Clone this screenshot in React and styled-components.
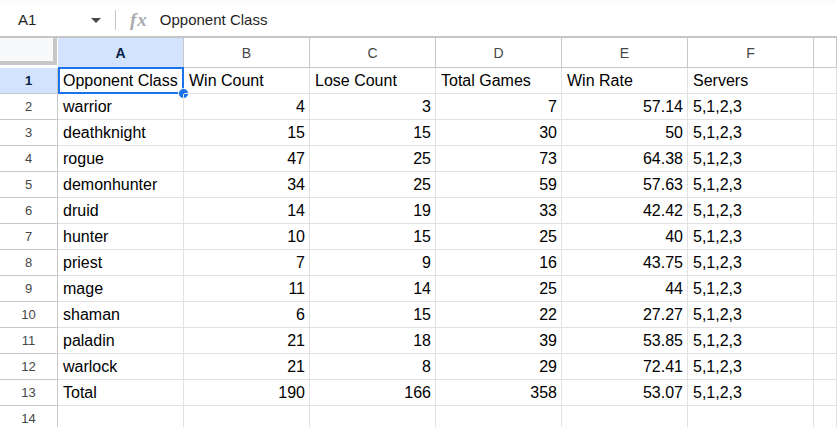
import React from 'react';
import styled, { createGlobalStyle } from 'styled-components';

const GlobalStyle = createGlobalStyle`
  html, body {
    margin: 0;
    padding: 0;
    background: #fff;
    overflow: hidden;
  }
  body {
    font-family: "Liberation Sans", Arial, sans-serif;
  }
`;

const rows = [
  ['Opponent Class', 'Win Count', 'Lose Count', 'Total Games', 'Win Rate', 'Servers'],
  ['warrior', 4, 3, 7, 57.14, '5,1,2,3'],
  ['deathknight', 15, 15, 30, 50, '5,1,2,3'],
  ['rogue', 47, 25, 73, 64.38, '5,1,2,3'],
  ['demonhunter', 34, 25, 59, 57.63, '5,1,2,3'],
  ['druid', 14, 19, 33, 42.42, '5,1,2,3'],
  ['hunter', 10, 15, 25, 40, '5,1,2,3'],
  ['priest', 7, 9, 16, 43.75, '5,1,2,3'],
  ['mage', 11, 14, 25, 44, '5,1,2,3'],
  ['shaman', 6, 15, 22, 27.27, '5,1,2,3'],
  ['paladin', 21, 18, 39, 53.85, '5,1,2,3'],
  ['warlock', 21, 8, 29, 72.41, '5,1,2,3'],
  ['Total', 190, 166, 358, 53.07, '5,1,2,3'],
  ['', '', '', '', '', ''],
];

const columns = ['A', 'B', 'C', 'D', 'E', 'F', ''];

const App = () => {
  return (
    <>
      <GlobalStyle />
      <Page>
        <FormulaBar>
          <NameBox>
            <CellRef>A1</CellRef>
            <Caret />
          </NameBox>
          <Divider />
          <FxIcon>fx</FxIcon>
          <FormulaText>Opponent Class</FormulaText>
        </FormulaBar>
        <Grid>
          <Corner />
          {columns.map((c, i) => (
            <ColHeader key={i} $selected={c === 'A'}>{c}</ColHeader>
          ))}
          {rows.map((r, ri) => (
            <React.Fragment key={ri}>
              <RowHeader $selected={ri === 0}>{ri + 1}</RowHeader>
              {r.map((v, ci) => (
                <Cell key={ci} $numeric={typeof v === 'number'}>
                  {v}
                  {ri === 0 && ci === 0 && (
                    <Selection>
                      <Handle />
                    </Selection>
                  )}
                </Cell>
              ))}
              <Cell />
            </React.Fragment>
          ))}
        </Grid>
      </Page>
    </>
  );
};

const Page = styled.div`
  width: 837px;
  height: 427px;
  overflow: hidden;
`;

const FormulaBar = styled.div`
  height: 38px;
  box-sizing: border-box;
  border-top: 3px solid #f9fbfd;
  border-bottom: 2px solid #c4c7c5;
  display: flex;
  align-items: center;
  background: #fff;
`;

const NameBox = styled.div`
  width: 115px;
  display: flex;
  align-items: center;
  justify-content: space-between;
  padding: 0 14px 0 18px;
  box-sizing: border-box;
`;

const CellRef = styled.span`
  font-size: 15px;
  color: #1f1f1f;
`;

const Caret = styled.span`
  width: 0;
  height: 0;
  border-left: 5px solid transparent;
  border-right: 5px solid transparent;
  border-top: 5px solid #444746;
  margin-top: 1px;
`;

const Divider = styled.div`
  width: 1px;
  height: 20px;
  background: #c4c7c5;
`;

const FxIcon = styled.span`
  margin-left: 14px;
  font-family: "Liberation Serif", "Times New Roman", serif;
  font-style: italic;
  font-weight: 700;
  font-size: 19px;
  color: #a8abaf;
  letter-spacing: 1px;
`;

const FormulaText = styled.span`
  margin-left: 12px;
  font-size: 15px;
  color: #1f1f1f;
`;

const Grid = styled.div`
  display: grid;
  grid-template-columns: 58px repeat(6, 126px) 1fr;
  grid-template-rows: 30px;
  grid-auto-rows: 26px;
`;

const Corner = styled.div`
  background: #f8f9fa;
  border-right: 4px solid #c7c7c7;
  border-bottom: 4px solid #c7c7c7;
  margin-right: 1px;
  margin-bottom: 3px;
`;

const ColHeader = styled.div`
  display: flex;
  align-items: center;
  justify-content: center;
  box-sizing: border-box;
  border-right: 1px solid #c7c7c7;
  border-bottom: 1px solid #c7c7c7;
  background: ${p => (p.$selected ? '#d3e3fd' : '#fff')};
  color: ${p => (p.$selected ? '#041e49' : '#444746')};
  font-weight: ${p => (p.$selected ? 700 : 400)};
  font-size: 14px;
`;

const RowHeader = styled.div`
  display: flex;
  align-items: center;
  justify-content: center;
  box-sizing: border-box;
  border-right: 1px solid #c7c7c7;
  border-bottom: 1px solid #c7c7c7;
  background: ${p => (p.$selected ? '#d3e3fd' : '#fff')};
  color: ${p => (p.$selected ? '#041e49' : '#444746')};
  font-weight: ${p => (p.$selected ? 700 : 400)};
  font-size: 13px;
`;

const Cell = styled.div`
  position: relative;
  display: flex;
  align-items: center;
  justify-content: ${p => (p.$numeric ? 'flex-end' : 'flex-start')};
  padding: ${p => (p.$numeric ? '0 4px 0 0' : '0 0 0 5px')};
  box-sizing: border-box;
  border-right: 1px solid #e1e1e1;
  border-bottom: 1px solid #e1e1e1;
  font-size: 16px;
  color: #000;
  white-space: nowrap;
  overflow: visible;
`;

const Selection = styled.div`
  position: absolute;
  left: 0;
  top: -1px;
  right: -1px;
  bottom: -1px;
  border: 2px solid #1a73e8;
  pointer-events: none;
`;

const Handle = styled.div`
  position: absolute;
  right: -7px;
  bottom: -7px;
  width: 9px;
  height: 9px;
  border-radius: 50%;
  background: #1a73e8;
  border: 1px solid #fff;
`;

export default App;
